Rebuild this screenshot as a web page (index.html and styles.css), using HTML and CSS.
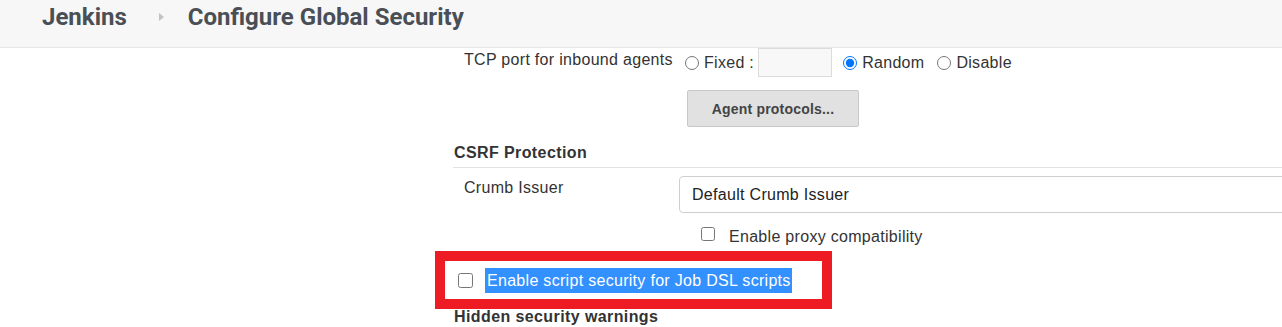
FILE: index.html
```html
<!DOCTYPE html>
<html lang="en">

<head>
    <meta charset="UTF-8">
    <title>Configure Global Security [Jenkins]</title>
    <link rel="stylesheet" href="styles.css">
</head>

<body>
    <header class="top-bar">
        <span class="crumb">Jenkins</span>
        <span class="crumb-arrow"></span>
        <span class="crumb">Configure Global Security</span>
    </header>

    <main class="config">
        <div class="row">
            <div class="row-label">TCP port for inbound agents</div>
            <div class="row-control port-options">
                <label class="opt"><input type="radio" name="port"> Fixed :</label>
                <input type="text" class="port-input">
                <label class="opt"><input type="radio" name="port" checked> Random</label>
                <label class="opt"><input type="radio" name="port"> Disable</label>
            </div>
        </div>
        <div class="row">
            <div class="row-label"></div>
            <div class="row-control">
                <button type="button" class="btn">Agent protocols...</button>
            </div>
        </div>

        <h3 class="section-title">CSRF Protection</h3>
        <div class="row">
            <div class="row-label crumb-label">Crumb Issuer</div>
            <div class="row-control">
                <select class="crumb-select">
                    <option>Default Crumb Issuer</option>
                </select>
            </div>
        </div>
        <div class="row">
            <div class="row-label"></div>
            <div class="row-control">
                <label class="check proxy"><input type="checkbox"> Enable proxy compatibility</label>
            </div>
        </div>

        <!-- highlighted option, outlined in red -->
        <div class="dsl-row">
            <input type="checkbox">
            <span class="selected-text">Enable script security for Job DSL scripts</span>
        </div>

        <h3 class="section-title plain">Hidden security warnings</h3>
    </main>
</body>

</html>
```

FILE: styles.css
```css
/* Global Styles */
body {
    margin: 0;
    font-family: 'Liberation Sans', Arial, sans-serif;
    font-size: 16px;
    line-height: 20px;
    letter-spacing: 0.3px;
    color: #333;
    background-color: #fff;
    overflow: hidden;
}

/* Header */
.top-bar {
    display: flex;
    align-items: flex-start;
    height: 47px;
    padding-left: 42px;
    background-color: #f7f7f7;
    border-bottom: 1px solid #e6e6e6;
}

.crumb {
    font-family: 'Roboto', sans-serif;
    font-weight: 700;
    font-size: 24px;
    line-height: 34px;
    letter-spacing: 0;
    color: #4a4f56;
}

.crumb-arrow {
    width: 0;
    height: 0;
    margin: 13px 24px 0 32px;
    border-top: 4px solid transparent;
    border-bottom: 4px solid transparent;
    border-left: 5px solid #c2c2c2;
}

/* Form */
.config {
    margin-left: 453px;
    width: 1000px;
}

.row {
    display: flex;
}

.row-label {
    width: 226px;
    padding-left: 11px;
    padding-top: 2px;
    flex-shrink: 0;
    box-sizing: border-box;
}

.row-control {
    display: flex;
    align-items: center;
}

.port-options {
    height: 29px;
}

.opt {
    display: flex;
    align-items: center;
}

.opt input {
    width: 14px;
    height: 14px;
    margin: 0 5px 0 6px;
    accent-color: #0075ff;
}

.port-input {
    width: 74px;
    height: 29px;
    box-sizing: border-box;
    margin: 0 6px 0 4px;
    border: 1px solid #dcdcdc;
    background-color: #f8f8f8;
}

.opt + .opt input {
    margin-left: 13px;
}

.port-input + .opt input {
    margin-left: 5px;
}

.btn {
    margin: 13px 0 0 8px;
    width: 172px;
    height: 37px;
    font-family: 'Liberation Sans', Arial, sans-serif;
    font-size: 14px;
    font-weight: 700;
    letter-spacing: 0.2px;
    color: #444;
    background-color: #e1e1e1;
    border: 1px solid #c8c8c8;
    border-radius: 2px;
}

.section-title {
    margin: 16px 0 0 0;
    padding: 0 0 4px 1px;
    font-size: 16px;
    line-height: 20px;
    letter-spacing: 0.4px;
    border-bottom: 1px solid #e2e2e2;
    color: #333;
}

.section-title.plain {
    margin-top: 8px;
    border-bottom: none;
}

.crumb-label {
    padding-top: 10px;
}

.crumb-select {
    appearance: none;
    margin-top: 8px;
    width: 720px;
    height: 37px;
    padding: 0 0 0 12px;
    font-family: 'Liberation Sans', Arial, sans-serif;
    font-size: 16px;
    letter-spacing: 0.3px;
    color: #222;
    background-color: #fff;
    border: 1px solid #cfcfcf;
    border-radius: 4px;
}

.check {
    display: flex;
    align-items: flex-start;
}

.check input {
    width: 14px;
    height: 14px;
    margin: 0 14px 0 0;
}

.proxy {
    margin: 14px 0 0 22px;
}

/* Script security row */
.dsl-row {
    position: relative;
    display: flex;
    align-items: center;
    width: 369px;
    height: 38px;
    margin-top: 14px;
    padding-left: 5px;
    box-sizing: border-box;
}

.dsl-row::after {
    content: "";
    position: absolute;
    top: -10px;
    bottom: -10px;
    left: -18px;
    right: -10px;
    border: 10px solid #ed1c24;
}

.dsl-row input {
    width: 15px;
    height: 15px;
    margin: 0 12px 0 0;
}

.selected-text {
    display: inline-block;
    line-height: 25px;
    padding: 0 1px 0 2px;
    color: #fff;
    background-color: #3390ff;
}
```
